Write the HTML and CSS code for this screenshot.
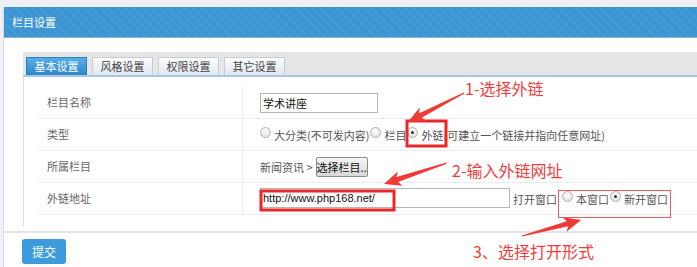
FILE: index.html
```html
<!DOCTYPE html>
<html lang="zh-CN">
<head>
  <meta charset="UTF-8">
  <title>栏目设置</title>
  <link rel="stylesheet" href="styles.css">
</head>
<body>
  <div class="wrap">
    <div class="head">栏目设置</div>
    <div class="main">
      <div class="tabbar">
        <span class="tab active">基本设置</span>
        <span class="tab">风格设置</span>
        <span class="tab">权限设置</span>
        <span class="tab">其它设置</span>
      </div>
      <div class="tabbody">
        <div class="row">
          <div class="label">栏目名称</div>
          <div class="value"><input class="txt short" type="text" value="学术讲座"></div>
        </div>
        <div class="row">
          <div class="label">类型</div>
          <div class="value">
            <span class="radio"></span><span class="opt">大分类(不可发内容)</span>
            <span class="radio"></span><span class="opt">栏目</span>
            <span class="radio on"></span><span class="opt">外链(可建立一个链接并指向任意网址)</span>
          </div>
        </div>
        <div class="row">
          <div class="label">所属栏目</div>
          <div class="value">新闻资讯 &gt; <button class="pick" type="button">选择栏目..</button></div>
        </div>
        <div class="row">
          <div class="label">外链地址</div>
          <div class="value">
            <input class="txt long" type="text" value="http://www.php168.net/">
            <span class="opt gap">打开窗口</span>
            <span class="radio"></span><span class="opt">本窗口</span>
            <span class="radio on"></span><span class="opt">新开窗口</span>
          </div>
        </div>
      </div>
    </div>
    <div class="foot">
      <button class="submit" type="button">提交</button>
    </div>
  </div>

  <!-- tutorial marks drawn over the form -->
  <svg class="marks" width="697" height="267" viewBox="0 0 697 267">
    <rect x="407" y="121" width="39" height="25" fill="none" stroke="#e8262b" stroke-width="3"/>
    <rect x="261" y="191" width="133" height="19" fill="none" stroke="#e8262b" stroke-width="3"/>
    <rect x="558.5" y="190.5" width="112" height="27" fill="none" stroke="#ef5a5a" stroke-width="1"/>
    <g fill="#f03a36">
      <polygon transform="translate(408 122) rotate(152.6)" points="-63,-0.6 -14,-2.6 -17,-7.5 0,0 -17,7.5 -14,2.6 -63,0.6"/>
      <polygon transform="translate(384 184) rotate(161.6)" points="-66,-0.6 -14,-2.6 -17,-7.5 0,0 -17,7.5 -14,2.6 -66,0.6"/>
      <polygon transform="translate(581 220) rotate(-15.2)" points="-61,-0.6 -14,-2.6 -17,-7.5 0,0 -17,7.5 -14,2.6 -61,0.6"/>
    </g>
  </svg>
  <div class="note n1">1-选择外链</div>
  <div class="note n2">2-输入外链网址</div>
  <div class="note n3">3、选择打开形式</div>
</body>
</html>
```

FILE: styles.css
```css
body {
  margin: 0;
  background: #eef0f5;
  font-family: "Noto Sans CJK SC", "Noto Sans", sans-serif;
  font-size: 11px;
  color: #555;
  position: relative;
  height: 267px;
  overflow: hidden;
}
.wrap {
  margin: 7px 0 0 3px;
  background: #fff;
  border-left: 1px solid #d8dbe0;
}
.head {
  height: 30px;
  line-height: 30px;
  padding-left: 8px;
  color: #fff;
  border-bottom: 1px solid #8fb0cc;
  background: repeating-linear-gradient(45deg, #3c94d2 0, #3c94d2 3px, #4399d5 3px, #4399d5 6px);
}
.main {
  padding: 14px 0 5px 19px;
  border-bottom: 2px solid #e2e4e8;
}
.tabbar {
  height: 23px;
  background: #e6e6e6;
  border-bottom: 2px solid #aac6e4;
  display: flex;
  align-items: flex-end;
  padding-left: 3px;
  gap: 5px;
}
.tab {
  width: 59px;
  height: 17px;
  line-height: 17px;
  text-align: center;
  color: #444;
  border: 1px solid #c5ccd6;
  border-bottom: none;
  background: linear-gradient(#fefefe, #dfe7f0);
}
.tab.active {
  color: #fff;
  border-color: #2c7cc0;
  background: linear-gradient(#58aee6, #2e86cb);
}
.tabbody {
  border-left: 1px solid #dcdcdc;
  padding: 10px 0 11px 14px;
}
.row {
  display: grid;
  grid-template-columns: 205px 1fr;
  height: 31px;
  border-bottom: 1px solid #ebebeb;
}
.label {
  padding-left: 9px;
  line-height: 31px;
  border-right: 1px solid #f0f0f0;
  color: #666;
}
.value {
  padding-left: 17px;
  display: flex;
  align-items: center;
  color: #555;
}
.txt {
  box-sizing: border-box;
  height: 20px;
  border: 1px solid #b5b5b5;
  padding: 0 2px;
  font-size: 11px;
  color: #111;
  outline: none;
}
.txt.short {
  width: 118px;
  font-family: "Noto Sans CJK SC", sans-serif;
}
.txt.long {
  width: 250px;
  font-family: "Liberation Sans", Arial, sans-serif;
  margin-top: -2px;
}
.radio {
  box-sizing: border-box;
  flex: none;
  width: 11px;
  height: 11px;
  border-radius: 50%;
  border: 1px solid #b3b3b3;
  background: radial-gradient(circle at 50% 35%, #fff, #d8d8d8);
  margin: 0 3px 0 1px;
  position: relative;
  top: -2px;
}
.value > .radio:first-child {
  margin-left: 0;
}
.radio.on::after {
  content: "";
  position: absolute;
  left: 3px;
  top: 3px;
  width: 3px;
  height: 3px;
  border-radius: 50%;
  background: #333;
}
.opt {
  white-space: nowrap;
}
.opt.gap {
  margin: 0 4px 0 3px;
}
.pick {
  height: 20px;
  margin-left: 3px;
  padding: 0;
  font-family: inherit;
  font-size: 11px;
  color: #111;
  border: 1px solid #8a8a8a;
  border-radius: 2px;
  background: linear-gradient(#f6f6f6, #d9d9d9);
}
.foot {
  padding: 6px 0 4px 18px;
}
.submit {
  width: 44px;
  height: 25px;
  border: none;
  border-radius: 3px;
  background: #3b9bdc;
  color: #fff;
  font-family: inherit;
  font-size: 12px;
}
.marks {
  position: absolute;
  left: 0;
  top: 0;
  pointer-events: none;
}
.note {
  position: absolute;
  color: #f03c3c;
  font-size: 16px;
  line-height: 18px;
  white-space: nowrap;
}
.n1 { left: 465px; top: 79px; }
.n2 { left: 452px; top: 161px; }
.n3 { left: 473px; top: 242px; }
```
